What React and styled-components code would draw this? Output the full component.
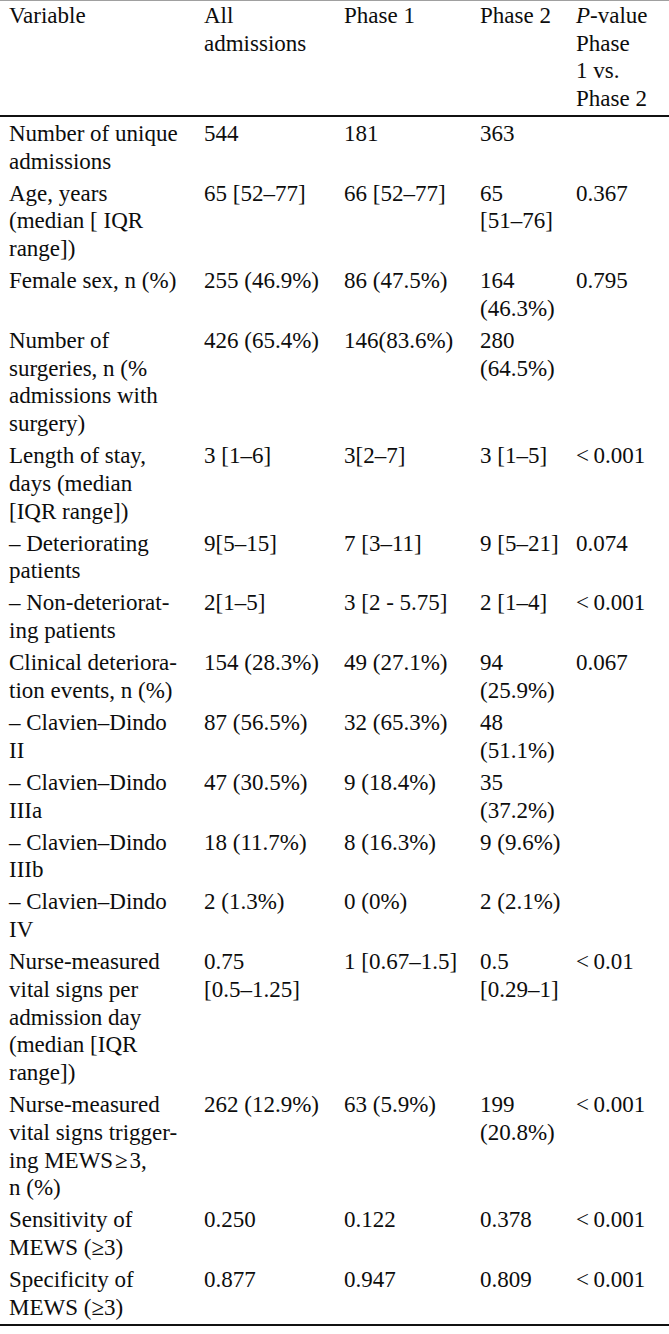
import React from 'react';
import styled, {createGlobalStyle} from 'styled-components';

const GlobalStyle = createGlobalStyle`
    html, body {
        margin: 0;
        padding: 0;
        background: #fff;
    }
    body {
        font-family: "Liberation Serif", "Times New Roman", serif;
        color: #0d0d0d;
    }
`

const LT = '<\u20090.001';

const rows = [
    [['Number of unique', 'admissions'], ['544'], ['181'], ['363'], []],
    [['Age, years', '(median [ IQR', 'range])'], ['65 [52–77]'], ['66 [52–77]'], ['65', '[51–76]'], ['0.367']],
    [['Female sex, n (%)'], ['255 (46.9%)'], ['86 (47.5%)'], ['164', '(46.3%)'], ['0.795']],
    [['Number of', 'surgeries, n (%', 'admissions with', 'surgery)'], ['426 (65.4%)'], ['146(83.6%)'], ['280', '(64.5%)'], []],
    [['Length of stay,', 'days (median', '[IQR range])'], ['3 [1–6]'], ['3[2–7]'], ['3 [1–5]'], [LT]],
    [['– Deteriorating', 'patients'], ['9[5–15]'], ['7 [3–11]'], ['9 [5–21]'], ['0.074']],
    [['– Non-deteriorat-', 'ing patients'], ['2[1–5]'], ['3 [2 - 5.75]'], ['2 [1–4]'], [LT]],
    [['Clinical deteriora-', 'tion events, n (%)'], ['154 (28.3%)'], ['49 (27.1%)'], ['94', '(25.9%)'], ['0.067']],
    [['– Clavien–Dindo', 'II'], ['87 (56.5%)'], ['32 (65.3%)'], ['48', '(51.1%)'], []],
    [['– Clavien–Dindo', 'IIIa'], ['47 (30.5%)'], ['9 (18.4%)'], ['35', '(37.2%)'], []],
    [['– Clavien–Dindo', 'IIIb'], ['18 (11.7%)'], ['8 (16.3%)'], ['9 (9.6%)'], []],
    [['– Clavien–Dindo', 'IV'], ['2 (1.3%)'], ['0 (0%)'], ['2 (2.1%)'], []],
    [['Nurse-measured', 'vital signs per', 'admission day', '(median [IQR', 'range])'], ['0.75', '[0.5–1.25]'], ['1 [0.67–1.5]'], ['0.5', '[0.29–1]'], ['<\u20090.01']],
    [['Nurse-measured', 'vital signs trigger-', 'ing MEWS\u200a≥\u200a3,', 'n (%)'], ['262 (12.9%)'], ['63 (5.9%)'], ['199', '(20.8%)'], [LT]],
    [['Sensitivity of', 'MEWS (≥3)'], ['0.250'], ['0.122'], ['0.378'], [LT]],
    [['Specificity of', 'MEWS (≥3)'], ['0.877'], ['0.947'], ['0.809'], [LT]],
];

function Cell({lines}) {
    return (
        <CellBox>
            {lines.map((l, i) => <Line key={i}>{l}</Line>)}
        </CellBox>
    )
}

function App() {
    return (
        <>
            <GlobalStyle/>
            <Table>
                <HeadRow>
                    <Cell lines={['Variable']}/>
                    <Cell lines={['All', 'admissions']}/>
                    <Cell lines={['Phase 1']}/>
                    <Cell lines={['Phase 2']}/>
                    <Cell lines={[<><Ital>P</Ital>-value</>, 'Phase', '1 vs.', 'Phase 2']}/>
                </HeadRow>
                <Body>
                    {rows.map((r, i) => (
                        <Row key={i}>
                            {r.map((c, j) => <Cell key={j} lines={c}/>)}
                        </Row>
                    ))}
                </Body>
            </Table>
        </>
    )
}

const Table = styled.div`
    width: 669px;
    font-size: 23px;
    line-height: 27.7px;
    border-top: 1px solid #a0a0a0;
    border-bottom: 2px solid #111;
`

const Row = styled.div`
    display: grid;
    grid-template-columns: 195px 140px 136px 96px 1fr;
    padding: 2px 0 2.4px 9px;
`

const HeadRow = styled(Row)`
    padding-top: 1px;
    padding-bottom: 2px;
    border-bottom: 2.5px solid #111;
`

const Body = styled.div`
    display: flex;
    flex-direction: column;
    padding-top: 1px;
`

const CellBox = styled.div`
    display: flex;
    flex-direction: column;
`

const Line = styled.span`
    white-space: nowrap;
`

const Ital = styled.i`
    font-style: italic;
`

export default App
